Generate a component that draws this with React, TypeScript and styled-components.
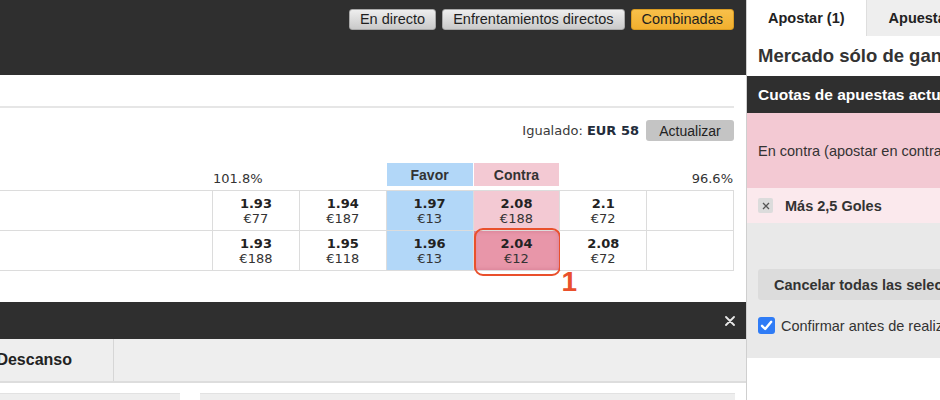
import styled, { createGlobalStyle } from "styled-components";

const GlobalStyle = createGlobalStyle`
  html, body {
    margin: 0;
    padding: 0;
    background: #fff;
  }
  body {
    width: 940px;
    height: 400px;
    overflow: hidden;
    font-family: "Liberation Sans", Arial, sans-serif;
    color: #333;
  }
`;

const Page = styled.div`
  display: flex;
  width: 940px;
  height: 400px;
  overflow: hidden;
`;

const Main = styled.main`
  width: 746px;
  flex-shrink: 0;
  display: flex;
  flex-direction: column;
  overflow: hidden;

  & > * {
    flex-shrink: 0;
  }
`;

const TopBar = styled.div`
  height: 75px;
  box-sizing: border-box;
  background: #2f2f2f;
  display: flex;
  justify-content: flex-end;
  align-items: flex-start;
  gap: 6px;
  padding: 9px 12px 0 0;
`;

const NavButton = styled.button<{ $active?: boolean }>`
  height: 21px;
  padding: 0 10px;
  border: 1px solid ${(p) => (p.$active ? "#d99b22" : "#a8a8a8")};
  border-radius: 3px;
  background: ${(p) =>
    p.$active
      ? "linear-gradient(#f8c04a, #f2af2e)"
      : "linear-gradient(#eeeeee, #c9c9c9)"};
  font: 14.5px "Liberation Sans", Arial, sans-serif;
  line-height: 19px;
  color: #1f1f1f;
  white-space: nowrap;
`;

const Content = styled.section`
  display: flex;
  flex-direction: column;
  padding-right: 12px;
`;

const Divider = styled.div`
  margin-top: 31px;
  height: 2px;
  background: #e6e6e6;
`;

const Toolbar = styled.div`
  margin-top: 12px;
  height: 21px;
  display: flex;
  justify-content: flex-end;
  align-items: center;
  gap: 7px;
`;

const Matched = styled.span`
  font: 13px "DejaVu Sans", Verdana, sans-serif;
  color: #3a3a3a;

  b {
    color: #232c3b;
  }
`;

const UpdateButton = styled.button`
  width: 88px;
  height: 21px;
  padding: 0;
  border: 0;
  border-radius: 3px;
  background: #c4c4c4;
  font: 14px "Liberation Sans", Arial, sans-serif;
  color: #222;
`;

const GridRow = styled.div`
  display: grid;
  grid-template-columns: 212px repeat(6, 1fr);
  column-gap: 1px;
  padding-right: 1px;
`;

const HeadRow = styled(GridRow)`
  margin-top: 22px;
  height: 23px;
`;

const Percent = styled.div<{ $col: number; $align: "left" | "right" }>`
  grid-column: ${(p) => p.$col};
  align-self: end;
  text-align: ${(p) => p.$align};
  font: 13px "DejaVu Sans", Verdana, sans-serif;
  line-height: 15px;
  color: #333;
`;

const SideHead = styled.div<{ $col: number; $tone: "back" | "lay" }>`
  grid-column: ${(p) => p.$col};
  display: flex;
  align-items: center;
  justify-content: center;
  background: ${(p) => (p.$tone === "back" ? "#b2d7f8" : "#f3c9d3")};
  font: bold 14px "Liberation Sans", Arial, sans-serif;
  color: #333;
`;

const Body = styled(GridRow)`
  margin-top: 4px;
  row-gap: 1px;
  padding: 1px 1px 1px 0;
  grid-auto-rows: 39px;
  background: #dcdcdc;
`;

type Tone = "plain" | "back" | "lay" | "picked";

const toneColor: Record<Tone, string> = {
  plain: "#ffffff",
  back: "#b2d7f8",
  lay: "#f3c9d3",
  picked: "#e896a9",
};

const OddsCell = styled.div<{ $tone: Tone }>`
  position: relative;
  display: flex;
  flex-direction: column;
  align-items: center;
  justify-content: center;
  background: ${(p) => toneColor[p.$tone]};
  font-family: "DejaVu Sans", Verdana, sans-serif;
  font-size: 13px;
  line-height: 15px;
  box-shadow: ${(p) =>
    p.$tone === "picked" ? "inset 0 0 4px rgba(150, 40, 70, 0.25)" : "none"};
`;

const Price = styled.span`
  font-weight: bold;
  color: #222;
`;

const Stake = styled.span`
  color: #333;
`;

const Highlight = styled.span`
  position: absolute;
  top: -3px;
  left: 0;
  right: -2px;
  bottom: -6px;
  border: 2.5px solid #e9502c;
  border-radius: 9px;
  pointer-events: none;
`;

const Marker = styled.span`
  position: absolute;
  left: 88px;
  top: 35px;
  font: bold 28px "Liberation Sans", Arial, sans-serif;
  color: #e9502c;
  z-index: 2;
`;

const Drawer = styled.div`
  margin-top: 31px;
  height: 37px;
  background: #2f2f2f;
  display: flex;
  justify-content: flex-end;
  align-items: center;
  padding-right: 11px;
`;

const TabStrip = styled.div`
  height: 42px;
  display: flex;
  background: #eeeeee;
  border-bottom: 2px solid #dddddd;
`;

const LowerTab = styled.div`
  width: 114px;
  flex-shrink: 0;
  box-sizing: border-box;
  display: flex;
  align-items: center;
  justify-content: flex-end;
  padding-right: 41px;
  border-right: 1px solid #d6d6d6;
  font: bold 16px "Liberation Sans", Arial, sans-serif;
  color: #222;
  white-space: nowrap;
`;

const Panels = styled.div`
  margin-top: 10px;
  display: flex;
  gap: 20px;
  padding-right: 11px;
`;

const Panel = styled.div<{ $width?: number }>`
  ${(p) => (p.$width ? `width: ${p.$width}px;` : "flex: 1;")}
  height: 20px;
  background: #eeeeee;
  border-top: 1px solid #e2e2e2;
`;

const Side = styled.aside`
  flex: 1;
  min-width: 0;
  display: flex;
  flex-direction: column;
  border-left: 1px solid #cfcfcf;
  overflow: hidden;
  white-space: nowrap;
  color: #333;

  & > * {
    flex-shrink: 0;
  }
`;

const SideTabs = styled.div`
  height: 36px;
  display: flex;
`;

const SideTab = styled.div<{ $active?: boolean }>`
  display: flex;
  align-items: center;
  padding: 0 21px 0 ${(p) => (p.$active ? 21 : 22)}px;
  background: ${(p) => (p.$active ? "#ffffff" : "#eeeeee")};
  border-left: ${(p) => (p.$active ? "none" : "1px solid #dedede")};
  font: bold 14.5px "Liberation Sans", Arial, sans-serif;
  color: #222;
  flex-shrink: 0;
`;

const MarketTitle = styled.div`
  height: 40px;
  display: flex;
  align-items: center;
  padding-left: 11px;
  font: bold 18.5px "Liberation Sans", Arial, sans-serif;
  color: #333;
`;

const SectionHeader = styled.div`
  height: 37px;
  display: flex;
  align-items: center;
  padding-left: 11px;
  background: #2f2f2f;
  font: bold 15.5px "Liberation Sans", Arial, sans-serif;
  color: #fff;
`;

const LayBox = styled.div`
  height: 75px;
  display: flex;
  align-items: center;
  padding-left: 11px;
  background: #f3c9d3;
  font-size: 14.5px;
  color: #333;
`;

const SelectionRow = styled.div`
  height: 35px;
  display: flex;
  align-items: center;
  gap: 12px;
  padding-left: 11px;
  background: #fbe9ed;
  font: bold 14.5px "Liberation Sans", Arial, sans-serif;
  color: #333;
`;

const RemoveBox = styled.span`
  width: 15px;
  height: 15px;
  flex-shrink: 0;
  display: flex;
  align-items: center;
  justify-content: center;
  border-radius: 2px;
  background: #dcdcdc;
`;

const GrayArea = styled.div`
  height: 135px;
  box-sizing: border-box;
  display: flex;
  flex-direction: column;
  align-items: flex-start;
  padding: 46px 0 0 11px;
  background: #e9e9e9;
`;

const CancelButton = styled.button`
  width: 240px;
  height: 31px;
  flex-shrink: 0;
  padding: 0 0 0 16px;
  border: 0;
  border-radius: 3px;
  background: #dcdcdc;
  text-align: left;
  font: bold 14.5px "Liberation Sans", Arial, sans-serif;
  color: #333;
  white-space: nowrap;
`;

const ConfirmRow = styled.label`
  margin-top: 17px;
  display: flex;
  align-items: center;
  gap: 6px;
  font-size: 14.5px;
  color: #333;
`;

const CloseIcon = () => (
  <svg width="10" height="10" viewBox="0 0 10 10">
    <path d="M1 1L9 9M9 1L1 9" stroke="#e8e8e8" strokeWidth="1.8" strokeLinecap="round" />
  </svg>
);

const SmallX = () => (
  <svg width="8" height="8" viewBox="0 0 8 8">
    <path d="M1 1L7 7M7 1L1 7" stroke="#555" strokeWidth="1.3" />
  </svg>
);

const CheckBox = () => (
  <svg width="17" height="17" viewBox="0 0 17 17">
    <rect x="0" y="0" width="17" height="17" rx="3" fill="#2f7cf6" />
    <path d="M4 8.8L7.2 12L13.2 4.8" stroke="#fff" strokeWidth="2.4" fill="none" strokeLinecap="round" strokeLinejoin="round" />
  </svg>
);

type Quote = { price?: string; stake?: string; tone: Tone };

const rows: Quote[][] = [
  [
    { price: "1.93", stake: "€77", tone: "plain" },
    { price: "1.94", stake: "€187", tone: "plain" },
    { price: "1.97", stake: "€13", tone: "back" },
    { price: "2.08", stake: "€188", tone: "lay" },
    { price: "2.1", stake: "€72", tone: "plain" },
    { tone: "plain" },
  ],
  [
    { price: "1.93", stake: "€188", tone: "plain" },
    { price: "1.95", stake: "€118", tone: "plain" },
    { price: "1.96", stake: "€13", tone: "back" },
    { price: "2.04", stake: "€12", tone: "picked" },
    { price: "2.08", stake: "€72", tone: "plain" },
    { tone: "plain" },
  ],
];

export default function App() {
  return (
    <>
      <GlobalStyle />
      <Page>
        <Main>
          <TopBar>
            <NavButton>En directo</NavButton>
            <NavButton>Enfrentamientos directos</NavButton>
            <NavButton $active>Combinadas</NavButton>
          </TopBar>
          <Content>
            <Divider />
            <Toolbar>
              <Matched>
                Igualado: <b>EUR 58</b>
              </Matched>
              <UpdateButton>Actualizar</UpdateButton>
            </Toolbar>
            <HeadRow>
              <Percent $col={2} $align="left">101.8%</Percent>
              <SideHead $col={4} $tone="back">Favor</SideHead>
              <SideHead $col={5} $tone="lay">Contra</SideHead>
              <Percent $col={7} $align="right">96.6%</Percent>
            </HeadRow>
            <Body>
              {rows.map((row, r) => [
                <OddsCell key={`r${r}-name`} $tone="plain" />,
                ...row.map((q, c) => (
                  <OddsCell key={`r${r}-${c}`} $tone={q.tone}>
                    {q.price && <Price>{q.price}</Price>}
                    {q.stake && <Stake>{q.stake}</Stake>}
                    {q.tone === "picked" && (
                      <>
                        <Highlight />
                        <Marker>1</Marker>
                      </>
                    )}
                  </OddsCell>
                )),
              ])}
            </Body>
          </Content>
          <Drawer>
            <CloseIcon />
          </Drawer>
          <TabStrip>
            <LowerTab>Descanso</LowerTab>
          </TabStrip>
          <Panels>
            <Panel $width={180} />
            <Panel />
          </Panels>
        </Main>
        <Side>
          <SideTabs>
            <SideTab $active>Apostar (1)</SideTab>
            <SideTab>Apuestas abiertas</SideTab>
          </SideTabs>
          <MarketTitle>Mercado sólo de ganadores</MarketTitle>
          <SectionHeader>Cuotas de apuestas actualizadas</SectionHeader>
          <LayBox>En contra (apostar en contra de)</LayBox>
          <SelectionRow>
            <RemoveBox>
              <SmallX />
            </RemoveBox>
            Más 2,5 Goles
          </SelectionRow>
          <GrayArea>
            <CancelButton>Cancelar todas las selecciones</CancelButton>
            <ConfirmRow>
              <CheckBox />
              Confirmar antes de realizar apuestas
            </ConfirmRow>
          </GrayArea>
        </Side>
      </Page>
    </>
  );
}
